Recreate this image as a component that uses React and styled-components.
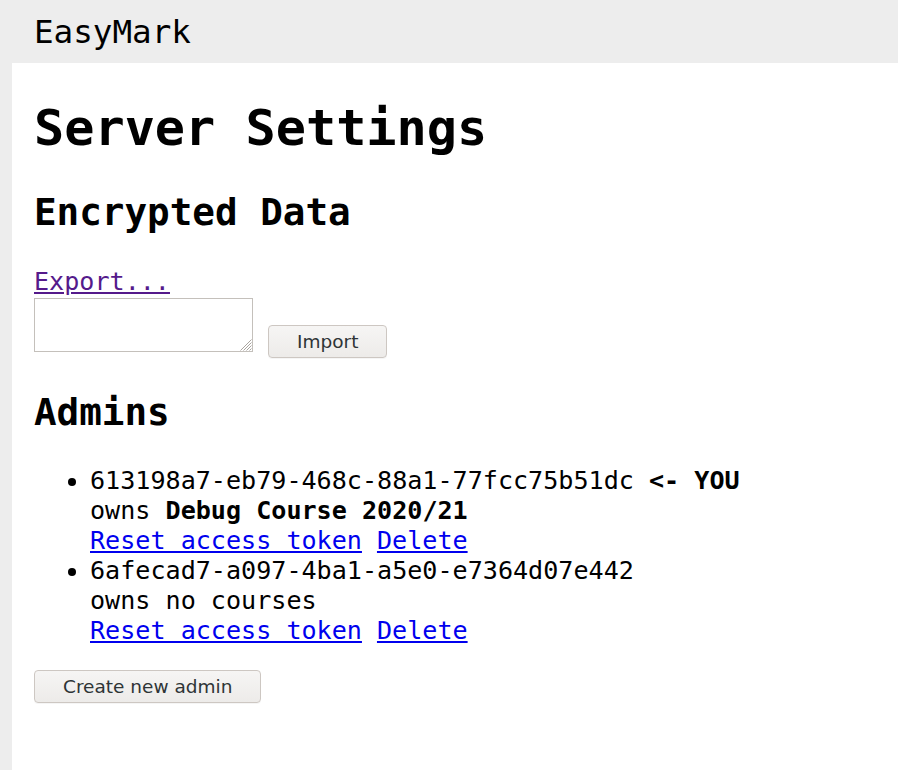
import React from "react";
import styled, { createGlobalStyle } from "styled-components";

const Global = createGlobalStyle`
  html, body {
    margin: 0;
    padding: 0;
    background: #ededed;
  }
  body {
    font-family: "DejaVu Sans Mono", monospace;
    font-size: 25.1px;
    color: #000;
  }
`;

const Page = styled.div`
  display: flex;
  flex-direction: column;
  min-height: 770px;
`;

const Header = styled.header`
  height: 63px;
  display: flex;
  align-items: center;
  padding-left: 34px;
  font-size: 32.6px;
  background: #ededed;
`;

const Main = styled.main`
  flex: 1;
  margin-left: 12px;
  background: #fff;
  padding: 1px 22px 0;
`;

const Title = styled.h1`
  font-size: 50.2px;
  margin: 34px 0 33px;
  line-height: normal;
`;

const Section = styled.h2`
  font-size: 37.6px;
  margin: 0 0 ${(p) => p.$after}px;
  line-height: normal;
`;

const LinkLine = styled.div`
  line-height: 29px;
`;

const TextLink = styled.a`
  color: ${(p) => (p.$visited ? "#551a8b" : "#0000ee")};
  text-decoration: underline;
  cursor: pointer;
`;

const ImportRow = styled.div`
  display: flex;
  align-items: flex-start;
  gap: 15px;
  margin: 2px 0 32px;
`;

const AreaWrap = styled.div`
  position: relative;
  width: 219px;
  height: 54px;
`;

const Area = styled.textarea`
  box-sizing: border-box;
  width: 219px;
  height: 54px;
  border: 1px solid #c4c0bb;
  resize: none;
  margin: 0;
  padding: 2px;
  display: block;
`;

const Grip = styled.svg`
  position: absolute;
  right: 1px;
  bottom: 1px;
  width: 14px;
  height: 14px;
  pointer-events: none;
`;

const Button = styled.button`
  box-sizing: border-box;
  height: 33px;
  padding: 0 ${(p) => p.$pad}px;
  margin-top: ${(p) => p.$top || 0}px;
  font-family: "DejaVu Sans", sans-serif;
  font-size: 18.5px;
  color: #2e3436;
  background: linear-gradient(#f6f5f4, #edebe9);
  border: 1px solid #cdc7c2;
  border-radius: 4px;
  box-shadow: 0 1px 0 rgba(0, 0, 0, 0.04);
  cursor: pointer;
`;

const AdminList = styled.ul`
  margin: 0 0 24px;
  padding-left: 56px;
  line-height: 30px;
  list-style: disc;
`;

const Item = styled.li``;

const Line = styled.div``;

const Strong = styled.b`
  font-weight: bold;
`;

const LinkRow = styled.div`
  display: flex;
  gap: 15px;
`;

const admins = [
  {
    id: "613198a7-eb79-468c-88a1-77fcc75b51dc",
    you: true,
    course: "Debug Course 2020/21",
  },
  { id: "6afecad7-a097-4ba1-a5e0-e7364d07e442", you: false, course: null },
];

export default function App() {
  return (
    <>
      <Global />
      <Page>
        <Header>EasyMark</Header>
        <Main>
          <Title>Server Settings</Title>
          <Section $after={33}>Encrypted Data</Section>
          <LinkLine>
            <TextLink $visited href="#export">
              Export...
            </TextLink>
          </LinkLine>
          <ImportRow>
            <AreaWrap>
              <Area />
              <Grip viewBox="0 0 14 14">
                <path
                  d="M13.5 2.5 L2.5 13.5 M13.5 5.5 L5.5 13.5 M13.5 8.5 L8.5 13.5 M13.5 11.5 L11.5 13.5"
                  stroke="#aaa5a0"
                  strokeWidth="1"
                  fill="none"
                />
              </Grip>
            </AreaWrap>
            <Button $pad={28} $top={27}>
              Import
            </Button>
          </ImportRow>
          <Section $after={32}>Admins</Section>
          <AdminList>
            {admins.map((a) => (
              <Item key={a.id}>
                <Line>
                  {a.id}
                  {a.you && <Strong> &lt;- YOU</Strong>}
                </Line>
                <Line>
                  owns {a.course ? <Strong>{a.course}</Strong> : "no courses"}
                </Line>
                <LinkRow>
                  <TextLink href="#reset">Reset access token</TextLink>
                  <TextLink href="#delete">Delete</TextLink>
                </LinkRow>
              </Item>
            ))}
          </AdminList>
          <Button $pad={28}>Create new admin</Button>
        </Main>
      </Page>
    </>
  );
}
